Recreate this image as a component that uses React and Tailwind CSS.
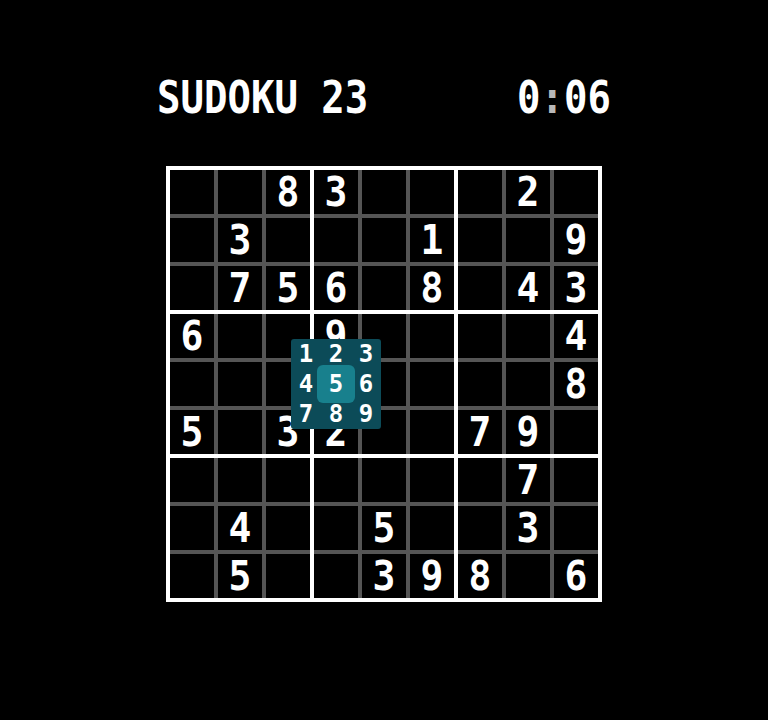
import React from "react";

const board = [
  [0, 0, 8, 3, 0, 0, 0, 2, 0],
  [0, 3, 0, 0, 0, 1, 0, 0, 9],
  [0, 7, 5, 6, 0, 8, 0, 4, 3],
  [6, 0, 0, 9, 0, 0, 0, 0, 4],
  [0, 0, 0, 0, 0, 0, 0, 0, 8],
  [5, 0, 3, 2, 0, 0, 7, 9, 0],
  [0, 0, 0, 0, 0, 0, 0, 7, 0],
  [0, 4, 0, 0, 5, 0, 0, 3, 0],
  [0, 5, 0, 0, 3, 9, 8, 0, 6],
];

const font = { fontFamily: '"DejaVu Sans Mono", "Liberation Mono", monospace' };

function Box({ br, bc }) {
  const cells = [];
  for (let r = 0; r < 3; r++) {
    for (let c = 0; c < 3; c++) {
      const v = board[br * 3 + r][bc * 3 + c];
      cells.push(
        <div
          key={`${r}-${c}`}
          className="w-[44px] h-[44px] bg-black flex items-center justify-center text-white font-bold text-[40px] leading-none"
        >
          {v ? <span className="scale-x-[0.95]">{v}</span> : null}
        </div>
      );
    }
  }
  return <div className="bg-[#555555] grid grid-cols-3 gap-[4px]">{cells}</div>;
}

export default function App() {
  const boxes = [];
  for (let br = 0; br < 3; br++) for (let bc = 0; bc < 3; bc++) boxes.push(<Box key={`${br}${bc}`} br={br} bc={bc} />);
  return (
    <div className="w-[768px] h-[720px] bg-black flex flex-col items-center" style={font}>
      <div className="w-[454px] mt-[74px] h-[46px] flex justify-between items-center text-white font-bold text-[39px] leading-none">
        <span className="scale-y-[1.12] tracking-[0px]">SUDOKU 23</span>
        <span className="scale-y-[1.12]">
          0<span className="text-[#b8b8b8]">:</span>06
        </span>
      </div>
      <div className="relative mt-[46px] w-[436px] h-[436px] bg-white p-[4px] grid grid-cols-3 gap-[4px]">
        {boxes}
        <div className="absolute left-[125px] top-[173px] w-[90px] h-[90px] bg-[#0c4b58] rounded-[3px] grid grid-cols-3 grid-rows-3">
          <div className="absolute left-[7px] top-[7px] w-[38px] h-[38px] translate-x-[19px] translate-y-[19px] rounded-[6px] bg-[#18808d]" />
          {[1, 2, 3, 4, 5, 6, 7, 8, 9].map((n) => (
            <div
              key={n}
              className="relative flex items-center justify-center text-white font-bold text-[24px] leading-none"
            >
              {n}
            </div>
          ))}
        </div>
      </div>
    </div>
  );
}
